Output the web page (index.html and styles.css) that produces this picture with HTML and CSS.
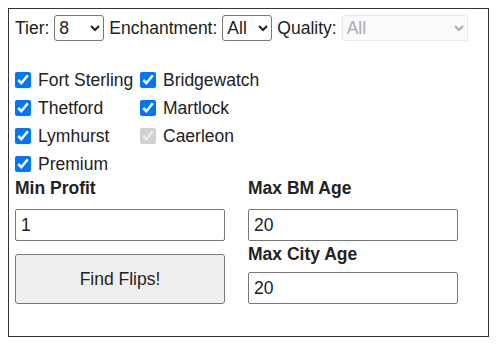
FILE: index.html
```html
<!DOCTYPE html>
<html lang="en">
<head>
    <meta charset="UTF-8">
    <title>Flip Finder</title>
    <link rel="stylesheet" href="styles.css">
</head>
<body>
    <div class="panel">
        <div class="filters">
            <label>Tier:</label>
            <select class="sel-tier">
                <option>8</option>
            </select>
            <label>Enchantment:</label>
            <select class="sel-ench">
                <option>All</option>
            </select>
            <label>Quality:</label>
            <select class="sel-quality" disabled>
                <option>All</option>
            </select>
        </div>

        <div class="cities">
            <label class="city"><input type="checkbox" checked> Fort Sterling</label>
            <label class="city"><input type="checkbox" checked> Bridgewatch</label>
            <label class="city"><input type="checkbox" checked> Thetford</label>
            <label class="city"><input type="checkbox" checked> Martlock</label>
            <label class="city"><input type="checkbox" checked> Lymhurst</label>
            <label class="city"><input type="checkbox" checked disabled> Caerleon</label>
            <label class="city"><input type="checkbox" checked> Premium</label>
        </div>

        <div class="fields">
            <div class="col">
                <div class="field-label">Min Profit</div>
                <input type="text" class="num" value="1">
                <button class="find-btn">Find Flips!</button>
            </div>
            <div class="col">
                <div class="field-label">Max BM Age</div>
                <input type="text" class="num" value="20">
                <div class="field-label second">Max City Age</div>
                <input type="text" class="num" value="20">
            </div>
        </div>
    </div>
</body>
</html>
```

FILE: styles.css
```css
body {
    margin: 8px;
    font-family: "Liberation Sans", Arial, sans-serif;
    font-size: 17.5px;
    color: #222;
}

.panel {
    box-sizing: border-box;
    width: 481px;
    height: 329px;
    border: 1px solid #333;
    padding: 0 6px;
}

.filters {
    display: flex;
    align-items: center;
    gap: 5px;
    height: 26px;
    margin-top: 6px;
}

select {
    font-family: "Liberation Sans", Arial, sans-serif;
    font-size: 17.5px;
    height: 26px;
    color: #222;
    border: 1px solid #767676;
    border-radius: 3px;
    background: #fff;
}

.sel-tier {
    width: 50px;
}

.sel-ench {
    width: 50px;
}

.sel-quality {
    width: 126px;
    color: #888;
    background: #fafafa;
    border-color: #e0e0e0;
}

.cities {
    display: grid;
    grid-template-columns: 125px auto;
    justify-content: start;
    margin-top: 25px;
}

.city {
    display: flex;
    align-items: center;
    height: 28px;
}

.city input {
    width: 16px;
    height: 16px;
    margin: 0 7px 0 0;
    accent-color: #0075ff;
}

.fields {
    display: flex;
    gap: 23px;
    margin-top: 0;
}

.col {
    display: flex;
    flex-direction: column;
    width: 210px;
}

.field-label {
    font-weight: bold;
    height: 20px;
    line-height: 20px;
    margin-bottom: 11px;
}

.field-label.second {
    margin-top: 3px;
    margin-bottom: 8px;
}

.num {
    box-sizing: border-box;
    width: 210px;
    height: 32px;
    font-family: "Liberation Sans", Arial, sans-serif;
    font-size: 17.5px;
    padding: 0 5px;
    border: 1px solid #767676;
    border-radius: 2px;
    color: #222;
}

.find-btn {
    margin-top: 13px;
    height: 50px;
    width: 210px;
    font-family: "Liberation Sans", Arial, sans-serif;
    font-size: 17.5px;
    color: #222;
    background: #efefef;
    border: 1px solid #767676;
    border-radius: 3px;
}
```
